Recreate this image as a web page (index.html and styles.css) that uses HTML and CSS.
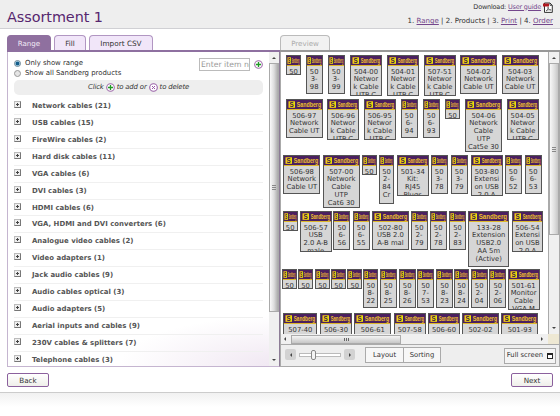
FILE: index.html
```html
<!DOCTYPE html>
<html lang="en">
<head>
<meta charset="utf-8">
<title>Assortment 1</title>
<link rel="stylesheet" href="styles.css">
</head>
<body>
<svg class="defs" aria-hidden="true">
  <symbol id="add" viewBox="0 0 9 9"><circle cx="4.5" cy="4.5" r="3.8" fill="#fff" stroke="#a06cab" stroke-width="1.1"/><path d="M4.5 2v5M2 4.5h5" stroke="#209a25" stroke-width="1.3"/></symbol>
  <symbol id="del" viewBox="0 0 9 9"><circle cx="4.5" cy="4.5" r="3.8" fill="#fff" stroke="#9a62a8" stroke-width="1.1"/><path d="M3 3l3 3M6 3l-3 3" stroke="#9a5aa8" stroke-width="1"/></symbol>
</svg>
<header class="top">
  <h1>Assortment 1</h1>
  <div class="top-right">
    <div class="download"><span>Download: <a>User guide</a></span>
      <svg width="10" height="11" viewBox="0 0 10 11"><path d="M1.5 1h5.500l2.300 2.400v7H1.500z" fill="#fff" stroke="#333"/><path d="M7 1v2.400h2.300" fill="none" stroke="#333" stroke-width=".8"/><path d="M0 1.500h6v3H0z" fill="#b01820"/><path d="M3 9c2-1 2.500-3 2-4.200c-.2 2 1 3.200 3.200 3.200c-2-.6-4-.2-5.200 1z" fill="none" stroke="#555" stroke-width=".7"/></svg>
    </div>
    <nav class="steps">1. <a>Range</a> | 2. Products | 3. <a>Print</a> | 4. <a>Order</a></nav>
  </div>
</header>
<main class="columns">
  <section class="left">
    <div class="tabs"><span class="tab on">Range</span><span class="tab fill">Fill</span><span class="tab csv">Import CSV</span></div>
    <div class="range">
      <div class="range-body">
        <div class="filter">
          <div class="radios">
            <div class="opt"><i class="radio checked"></i>Only show range</div>
            <div class="opt"><i class="radio"></i>Show all Sandberg products</div>
          </div>
          <div class="field">Enter item no.</div>
          <svg class="ico"><use href="#add"/></svg>
        </div>
        <div class="hint">Click <svg class="ico"><use href="#add"/></svg> to add or <svg class="ico"><use href="#del"/></svg> to delete</div>
        <ul class="groups" id="groups"></ul>
      </div>
      <div class="vbar"><b class="up"></b><div class="thumb left-thumb"></div><b class="down"></b></div>
    </div>
  </section>
  <section class="right">
    <div class="tabs gray"><span class="tab preview">Preview</span></div>
    <div class="pane">
      <div class="view">
        <div class="board" id="board"></div>
        <div class="vbar"><b class="up"></b><div class="thumb right-thumb"></div><b class="down"></b></div>
      </div>
      <div class="hbar"><b class="prev"></b><div class="hthumb"></div><b class="next"></b><i class="corner"></i></div>
      <div class="tools">
        <span class="arrow"><b class="prev"></b></span>
        <span class="slider"><i></i></span>
        <span class="arrow"><b class="next"></b></span>
        <span class="pair"><span>Layout</span><span>Sorting</span></span>
        <span class="full">Full screen <i></i></span>
      </div>
    </div>
  </section>
</main>
<footer class="actions"><span class="btn">Back</span><span class="btn">Next</span></footer>
<div class="fade"></div>
<script src="app.js"></script>
</body>
</html>
```
FILE: styles.css
```css
* { box-sizing: border-box; }
body { margin: 0; width: 560px; height: 416px; overflow: hidden; background: #fff; color: #333; font: 7.5px/9px "DejaVu Sans", sans-serif; }
.defs { position: absolute; width: 0; height: 0; }
a { color: #74478c; text-decoration: underline; }
.top { height: 29px; background: #eee; border-bottom: 1.5px solid #d0d0d4; display: flex; justify-content: space-between; padding: 0 7px; }
h1 { margin: 9px 0 0; font: 14.4px/16px "DejaVu Sans", sans-serif; color: #56266e; letter-spacing: -.05px; }
.top-right { display: flex; flex-direction: column; align-items: flex-end; }
.download { display: flex; align-items: center; gap: 2px; height: 14px; font-size: 6.5px; letter-spacing: -.2px; }
.steps { margin-top: 1px; line-height: 11px; font-size: 7.05px; }
.columns { display: flex; padding-top: 6px; height: 338px; }
.left { width: 273px; margin-left: 7px; }
.right { width: 280px; }
.tabs { height: 17px; display: flex; gap: 3px; border-bottom: 2px solid #8e70a0; }
.tab { height: 15px; border: 1px solid #b196c2; border-bottom: 0; border-radius: 4px 4px 0 0; background: #f1e6f9; text-align: center; line-height: 15px; font-size: 7.1px; color: #333; }
.on { width: 44px; background: #8f709f; border-color: #8f709f; color: #f1e9f5; }
.fill { width: 32px; }
.csv { width: 64px; font-size: 7.3px; }
.gray { border-color: #999; }
.preview { width: 50px; background: #f2f2f2; border-color: #bbb; color: #aaa; font-size: 7.1px; }
.range { height: 315px; display: flex; border: 1px solid #c5b5d0; border-top: 0; border-right-color: #8d7d96; background: radial-gradient(ellipse 160px 50px at 100% 100%, #f0e7f2, #fff); }
.range-body { flex: 1; padding: 0 6px; overflow: hidden; }
.filter { display: flex; height: 28px; padding-top: 6px; }
.radios { flex: 1; padding-top: 1px; }
.opt { display: flex; align-items: center; gap: 4px; height: 9.5px; font-size: 6.95px; letter-spacing: -.03px; white-space: nowrap; }
.radio { width: 7px; height: 7px; border-radius: 50%; border: 1px solid #999; background: #e5e5e5; }
.checked { border-color: #6d8796; background: radial-gradient(circle, #145d8a 0 40%, #b5dcee 65%); }
.field { width: 51px; height: 13px; border: 1px solid #bbb; background: #fff; color: #999; font-size: 7.7px; line-height: 12px; white-space: nowrap; overflow: hidden; padding-left: 1px; }
.ico { width: 9px; height: 9px; }
.filter .ico { margin: 2px 0 0 4px; }
.hint { display: flex; align-items: center; justify-content: center; height: 15px; border-radius: 5px; background: #eee; font-style: italic; font-size: 6.9px; letter-spacing: -.16px; white-space: pre; }
.groups { list-style: none; margin: 0; padding: 3px 0 0; }
.groups li { display: flex; height: 16.93px; border-bottom: 1px solid #f0f0f0; line-height: 17px; font-weight: bold; font-size: 6.95px; color: #555; white-space: nowrap; }
.plus { width: 7px; height: 7px; margin: 3px 11px 0 0; border: 1px solid #bbb; border-right-color: #777; border-bottom-color: #777; background: linear-gradient(#444, #444) center/3px 1px no-repeat, linear-gradient(#444, #444) center/1px 3px no-repeat, #eee; }
.vbar { width: 10px; flex: none; background: #f0f0f0; display: flex; flex-direction: column; align-items: center; }
.thumb { width: 100%; border: 1px solid #aaa; }
.left-thumb { height: 249px; background: repeating-linear-gradient(#888 0 1px, transparent 1px 2px) center/4px 5px no-repeat, linear-gradient(90deg, #fafafa, #ddd 50%, #aaa); }
.right-thumb { height: 172px; background: repeating-linear-gradient(#888 0 1px, transparent 1px 2px) center/4px 5px no-repeat, linear-gradient(90deg, #f8f8f8, #ddd 60%, #c5c5c5); }
b { display: block; width: 0; height: 0; }
.up, .down { border: 2px solid transparent; }
.up { border-top: 0; border-bottom: 2px solid #444; margin: 5px 0 4px; }
.down { border-bottom: 0; border-top: 2px solid #444; margin: auto 0 5px; }
.prev, .next { border: 2px solid transparent; }
.prev { border-left: 0; border-right: 2px solid #444; }
.next { border-right: 0; border-left: 2px solid #444; }
.pane { height: 315px; border: 1px solid #aaa; border-top-width: 0; }
.view { display: flex; height: 282px; overflow: hidden; }
.board { flex: 1; padding-top: 3px; border-right: 1px solid #aaa; overflow: hidden; }
.row { display: flex; align-items: flex-start; }
.card { flex: none; overflow: hidden; border: 1px solid #555; background: #d6d6d6; text-align: center; font-size: 6.8px; line-height: 7.8px; color: #333; white-space: pre; }
.card svg { display: block; width: 100%; height: 10px; margin-bottom: 2.500px; background: #4b205f; border-bottom: 1px solid #ddb72a; font-family: "Liberation Sans", sans-serif; }
.card p { margin: 0; overflow: hidden; }
.hbar { height: 10px; display: flex; align-items: center; background: #f0f0f0; }
.hbar .prev { margin: 0 5px 0 3px; }
.hthumb { width: 110px; height: 9px; border: 1px solid #aaa; background: repeating-linear-gradient(90deg, #666 0 1px, transparent 1px 2px) center/5px 3px no-repeat, linear-gradient(#f5f5f5, #c6c6c6); }
.hbar .next { margin: 0 5px 0 auto; }
.corner { width: 11px; height: 10px; background: #eee8d3; }
.tools { height: 22px; display: flex; align-items: center; padding: 0 3px 2px 4px; background: #eee; border-top: 1px solid #aaa; }
.arrow { width: 11px; height: 11px; border-radius: 2px; background: #d2d2d2; display: flex; align-items: center; justify-content: center; }
.slider { width: 42px; height: 4px; margin: 0 3px; border: 1px solid #bbb; background: #fff; display: flex; align-items: center; }
.slider i { width: 5px; height: 10px; flex: none; margin-left: 11px; border: 1px solid #888; border-radius: 2px; background: #f4f4f4; }
.pair { display: flex; height: 16px; margin: 1px 0 0 10px; border: 1px solid #aaa; background: #f7f7f7; line-height: 15px; text-align: center; font-size: 6.8px; }
.pair span { width: 37px; }
.pair span + span { border-left: 1px solid #aaa; }
.full { margin: 2px 0 0 auto; width: 52px; height: 16px; border: 1px solid #aaa; background: #f4f4f4; display: flex; align-items: center; justify-content: center; gap: 4px; white-space: nowrap; font-size: 6.8px; }
.full i { width: 6px; height: 6px; border: 1px solid #222; border-top-width: 2px; background: #fff; }
.actions { height: 26px; padding: 6px 7px 0; display: flex; justify-content: space-between; border-bottom: 1px solid #ccc; }
.btn { width: 42px; height: 14px; border: 1px solid #8b609d; border-radius: 2px; background: linear-gradient(#fff, #efefea); text-align: center; line-height: 13px; font-size: 7.2px; }
.fade { height: 14px; background: linear-gradient(#f1f1f1, #fff); }
```
FILE: app.js
```js
const groups = ["Network cables (21)", "USB cables (15)", "FireWire cables (2)", "Hard disk cables (11)", "VGA cables (6)", "DVI cables (3)", "HDMI cables (6)", "VGA, HDMI and DVI converters (6)", "Analogue video cables (2)", "Video adapters (1)", "Jack audio cables (9)", "Audio cables optical (3)", "Audio adapters (5)", "Aerial inputs and cables (9)", "230V cables & splitters (7)", "Telephone cables (3)"];
for (const name of groups) {
  const li = document.createElement("li");
  const plus = document.createElement("i");
  plus.className = "plus";
  li.append(plus, name);
  document.getElementById("groups").append(li);
}

// Each row: height, then cards as [left, width, height, text].
const rows = [
  [44, [5, 15, 20, "50"], [24.7, 17, 39, "50\n3-\n98"], [46.7, 17, 39, "50\n3-\n99"], [69, 32, 41, "504-00\nNetwor\nk Cable\nUTP C"], [106, 32, 41, "504-01\nNetwor\nk Cable\nUTP C"], [142.7, 32, 41, "507-51\nNetwor\nk Cable\nUTP C"], [179, 37, 39, "504-02\nNetwork\nCable UT"], [220.7, 37, 39, "504-03\nNetwork\nCable UT"]],
  [56, [4.7, 37, 39, "506-97\nNetwork\nCable UT"], [46, 32, 41, "506-96\nNetwor\nk Cable\nUTP C"], [82.7, 32, 41, "506-95\nNetwor\nk Cable\nUTP C"], [119.7, 17, 39, "50\n6-\n94"], [141.7, 17, 39, "50\n6-\n93"], [164, 15, 20, "50"], [184, 37, 53, "504-06\nNetwork\nCable\nUTP\nCat5e 30"], [225.7, 32, 41, "504-05\nNetwor\nk Cable\nUTP C"]],
  [56, [2.3, 37, 39, "506-98\nNetwork\nCable UT"], [41.7, 37, 53, "507-00\nNetwork\nCable\nUTP\nCat6 30"], [80.7, 15, 20, "50"], [98, 15, 49, "50\n2-\n84\nCr"], [115.7, 32, 41, "501-34\nKit:\nRJ45\nPlugs"], [149.7, 17, 39, "50\n3-\n78"], [169.7, 17, 39, "50\n3-\n79"], [189.7, 32, 41, "503-80\nExtensi\non USB\n2.0 A"], [223.7, 17, 39, "50\n6-\n52"], [243.7, 17, 39, "50\n6-\n53"]],
  [58, [1.7, 15, 20, "50"], [18.7, 32, 41, "506-57\nUSB\n2.0 A-B\nmale"], [52.3, 17, 39, "50\n6-\n56"], [71.7, 17, 39, "50\n6-\n55"], [91, 37, 39, "502-80\nUSB 2.0\nA-B mal"], [129.7, 17, 39, "50\n2-\n79"], [148.7, 17, 39, "50\n2-\n78"], [168, 17, 39, "50\n2-\n83"], [187.3, 41, 56, "133-28\nExtension\nUSB2.0\nAA 5m\n(Active)"], [231, 31, 41, "506-54\nExtensi\non USB\n2.0 A"]],
  [44, [1, 15, 20, "50"], [17, 15, 20, "50"], [34, 15, 20, "50"], [50, 15, 20, "50"], [66.3, 15, 20, "50"], [82.3, 15, 39, "50\n8-\n22"], [98.7, 17, 39, "50\n8-\n25"], [117.7, 17, 39, "50\n8-\n26"], [136, 17, 39, "50\n7-\n53"], [155, 17, 39, "50\n8-\n23"], [173, 15, 39, "50\n8-\n24"], [189.7, 17, 39, "50\n2-\n04"], [208.3, 17, 39, "50\n2-\n06"], [226.7, 32, 41, "501-61\nMonitor\nCable\nVGA M"]],
  [40, [2.3, 34, 39, "507-40"], [39, 32, 39, "506-30"], [73.3, 37, 39, "506-61"], [112.7, 32, 39, "507-58"], [147, 32, 39, "506-60"], [181, 37, 39, "502-02"], [220.3, 37, 39, "501-93"]]
];
// The wordmark is condensed to whatever the card's header leaves beside the badge.
const mark = w => {
  const inner = w - 2;
  const badge = w < 20 ? 3.5 : 6.5;
  const start = badge + (w < 20 ? 1.2 : 3.2);
  const squeeze = ((inner - start - .8) / 36.9).toFixed(3);
  return `<svg viewBox="0 0 ${inner} 9" preserveAspectRatio="none"><rect x="${w < 20 ? .5 : 1.5}" y="1.300" width="${badge}" height="6.500" fill="#f4d80f"/><text transform="translate(${w < 20 ? 1 : 2.5} 7) scale(${badge / 7} 1)" font-size="6.800" font-weight="bold" fill="#35164a">S</text><text transform="translate(${start} 7.300) scale(${squeeze} 1)" font-size="8" font-weight="bold" fill="#f0c02c">Sandberg</text></svg>`;
};
const board = document.getElementById("board");
for (const [height, ...cards] of rows) {
  const row = document.createElement("div");
  row.className = "row";
  row.style.height = height + "px";
  let edge = 0;
  for (const [left, width, h, text] of cards) {
    const card = document.createElement("div");
    card.className = "card";
    card.style.cssText = `width:${width}px;height:${h}px;margin-left:${(left - edge).toFixed(1)}px`;
    // The text area stops short of the card's lower edge on cards too small for their text.
    const clip = h === 20 ? "height:5px" : h === 41 ? "height:26px" : "";
    card.innerHTML = mark(width) + `<p style="${clip}">${text}</p>`;
    row.append(card);
    edge = left + width;
  }
  board.append(row);
}
```
